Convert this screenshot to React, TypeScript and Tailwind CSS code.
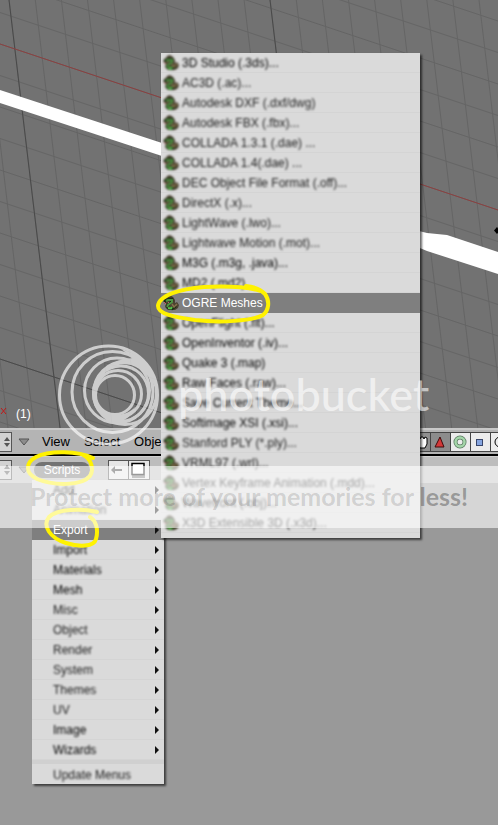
import React from "react";

type MenuEntry = { label: string; soft?: boolean; active?: boolean };

const exportItems: MenuEntry[] = [
  { label: "3D Studio (.3ds)..." },
  { label: "AC3D (.ac)...", soft: true },
  { label: "Autodesk DXF (.dxf/dwg)", soft: true },
  { label: "Autodesk FBX (.fbx)...", soft: true },
  { label: "COLLADA 1.3.1 (.dae) ...", soft: true },
  { label: "COLLADA 1.4(.dae) ...", soft: true },
  { label: "DEC Object File Format (.off)...", soft: true },
  { label: "DirectX (.x)...", soft: true },
  { label: "LightWave (.lwo)...", soft: true },
  { label: "Lightwave Motion (.mot)...", soft: true },
  { label: "M3G (.m3g, .java)..." },
  { label: "MD2 (.md2)" },
  { label: "OGRE Meshes", active: true },
  { label: "OpenFlight (.flt)..." },
  { label: "OpenInventor (.iv)..." },
  { label: "Quake 3 (.map)" },
  { label: "Raw Faces (.raw)..." },
  { label: "Save Current Theme..." },
  { label: "Softimage XSI (.xsi)..." },
  { label: "Stanford PLY (*.ply)...", soft: true },
  { label: "VRML97 (.wrl)...", soft: true },
  { label: "Vertex Keyframe Animation (.mdd)...", soft: true },
  { label: "Wavefront (.obj)...", soft: true },
  { label: "X3D Extensible 3D (.x3d)...", soft: true },
];

const scriptItems: MenuEntry[] = [
  { label: "Add" },
  { label: "Animation", soft: true },
  { label: "Export", active: true },
  { label: "Import" },
  { label: "Materials" },
  { label: "Mesh" },
  { label: "Misc", soft: true },
  { label: "Object", soft: true },
  { label: "Render", soft: true },
  { label: "System", soft: true },
  { label: "Themes", soft: true },
  { label: "UV", soft: true },
  { label: "Image" },
  { label: "Wizards" },
];

const steep = Array.from({ length: 21 }, (_, i) => -43 + i * 26.1);
const gentle = Array.from({ length: 19 }, (_, i) => -145 + i * 31.5);

function textTone(item: MenuEntry) {
  if (item.active) return "text-white";
  return item.soft ? "text-[#222222] blur-[1px]" : "text-black blur-[1px]";
}

function PythonIcon({ sharp }: { sharp?: boolean }) {
  return (
    <svg className={sharp ? "h-4 w-4 shrink-0" : "h-4 w-4 shrink-0 blur-[1px]"} viewBox="0 0 16 16" fill="none">
      <path d="M1 4 L3 3 L4 1 L7 0 L10 2 L12 5 L12 8 L14 7 L16 10 L15 13 L12 15 L5 15 L2 12 L3 9 L1 8 Z" fill="#4b4230" />
      <path d="M1 7 L3 5 L6 4 L9 4 L9 6 L4 11 L5 13 L9 14 L13 11" stroke="#1a2a14" strokeWidth="2.500" />
      <path d="M3 6 L5 5 L9 5 L9 7 L5 10 L4 12" stroke="#4f9443" strokeWidth="2" />
      <path d="M5 13 L8 13.500 L9 12" stroke="#55c24a" strokeWidth="2" />
      <path d="M9 9 L11 12 L14 9" stroke="#86714c" strokeWidth="1.500" />
      <path d="M1 7 L3 9 M5 7 L6 8" stroke="#c0606a" strokeWidth="1" />
    </svg>
  );
}

function Viewport() {
  return (
    <section className="h-[428px] overflow-hidden bg-[#727272]">
      <svg className="h-[428px] w-[498px]" viewBox="0 0 498 428" fill="none">
        {gentle.map((y) => (
          <path key={y} d={`M0 ${y} L498 ${y + 166}`} stroke="#656565" />
        ))}
        {steep.map((x) => (
          <path key={x} d={`M${x} 0 L${x + 51} 428`} stroke="#656565" />
        ))}
        <path d="M9 0 L60 428 M270 0 L321 428 M0 359 L207 428" stroke="#4a4a4a" />
        <path d="M0 44 L498 210" stroke="#8c4141" />
        <path d="M0 90 L165 144 L165 157 L0 103 Z" fill="#fff" />
        <path d="M415 230 L427 233 L447 235 L498 252 L498 274 L427 251 L415 246 Z" fill="#fff" />
        <path d="M494 230.500 L497 227 L500 230.500 L497 234 Z" fill="#000" />
        <path d="M1 408 L6 414 M6 408 L1 414" stroke="#c01818" />
        <text x="16" y="418" fill="#fff" fontSize="12" fontFamily="Liberation Sans, sans-serif">(1)</text>
      </svg>
    </section>
  );
}

function WindowTypeButton({ label }: { label: string }) {
  return (
    <button aria-label={label} className="flex h-5 w-3 items-center justify-end border border-l-0 border-[#555555] bg-[#d2d2d2]">
      <svg className="h-3 w-2" viewBox="0 0 8 12" fill="#555">
        <path d="M1 5 L4 1 L7 5 Z M1 7 L4 11 L7 7 Z" />
      </svg>
    </button>
  );
}

function Collapse() {
  return (
    <svg className="h-3 w-3" viewBox="0 0 12 12">
      <path d="M1 3 L11 3 L6 9 Z" fill="#8c8c8c" stroke="#555" />
    </svg>
  );
}

function ViewHeader() {
  return (
    <header className="flex h-7 items-center justify-between border-t-2 border-b-2 border-t-[#c8c8c8] border-b-black bg-[#b4b4b4]">
      <div className="flex items-center">
        <WindowTypeButton label="3D view window type" />
        <span className="mr-3 ml-1.5"><Collapse /></span>
        <nav className="flex gap-3.5 text-[13px] text-black">
          <button>View</button>
          <button>Select</button>
          <button>Object</button>
        </nav>
      </div>
      <div className="flex h-5 divide-x divide-[#444444] border-y border-[#444444] bg-[#ececec]">
        <button aria-label="Hand" className="w-5 bg-[#909090]">
          <svg className="h-[18px] w-5" viewBox="0 0 20 18">
            <path d="M6 4 L8 4 L9 6 L10 4 L12 4 L13 6 L14 4 L16 5 L16 11 L14 15 L9 15 L7 11 Z" fill="#fff" stroke="#000" />
          </svg>
        </button>
        <button aria-label="Translate" className="w-5 bg-[#8c8c8c]">
          <svg className="h-[18px] w-5" viewBox="0 0 20 18">
            <path d="M9 4 L13 14 L4 14 Z" fill="#d33838" stroke="#400c0c" />
          </svg>
        </button>
        <button aria-label="Rotate" className="w-5">
          <svg className="h-[18px] w-5" viewBox="0 0 20 18" fill="none">
            <circle cx="9" cy="9" r="4.500" stroke="#5a7a60" strokeWidth="4" />
            <circle cx="9" cy="9" r="4.500" stroke="#a5d6aa" strokeWidth="2.500" />
          </svg>
        </button>
        <button aria-label="Scale" className="w-5">
          <svg className="h-[18px] w-5" viewBox="0 0 20 18">
            <rect x="5.500" y="6.500" width="6" height="6" fill="#86a5e0" stroke="#39466b" />
          </svg>
        </button>
        <button aria-label="Orientation" className="w-[7px] overflow-hidden">
          <svg className="h-[18px] w-5" viewBox="0 0 20 18" fill="none">
            <circle cx="9" cy="9" r="5" stroke="#000" />
          </svg>
        </button>
      </div>
    </header>
  );
}

function ScriptsHeader() {
  return (
    <header className="flex h-[27px] items-center border-t border-[#d0d0d0] bg-[#bdbdbd]">
      <WindowTypeButton label="Scripts window type" />
      <span className="mr-1 ml-1.5"><Collapse /></span>
      <button className="h-4 w-14 rounded-lg bg-[#737373] text-[12px] leading-4 text-white">Scripts</button>
      <div className="ml-[18px] flex h-5 divide-x divide-[#555555] border border-[#555555] bg-[#e6e6e6]">
        <button aria-label="Back" className="w-5">
          <svg className="h-[18px] w-5" viewBox="0 0 20 18">
            <path d="M2 9 L6 5 L6 8 L13 8 L13 10 L6 10 L6 13 Z" fill="#333" />
          </svg>
        </button>
        <button aria-label="Full window" className="w-5">
          <svg className="h-[18px] w-5" viewBox="0 0 20 18">
            <rect x="3" y="14" width="13" height="3" fill="#777" />
            <rect x="3" y="2.500" width="12" height="11" fill="#fff" stroke="#000" strokeWidth="1.500" />
          </svg>
        </button>
      </div>
    </header>
  );
}

function ScriptsMenu() {
  return (
    <div role="menu" className="absolute top-[480px] left-8 w-[132px] bg-[#dadada] shadow-[2px_2px_2px_#00000099]">
      {scriptItems.map((item) => (
        <button
          key={item.label}
          role="menuitem"
          className={
            item.active
              ? "flex h-5 w-full items-center justify-between bg-[#7f7f7f] pr-1 pl-[21px] text-[12px]"
              : "flex h-5 w-full items-center justify-between pr-1 pl-[21px] text-[12px] inset-shadow-[0_-1px_#d4d4d4]"
          }
        >
          <span className={textTone(item)}>{item.label}</span>
          <svg className="h-2 w-1.5" viewBox="0 0 6 8">
            <path d="M1 0 L5 4 L1 8 Z" fill="#111" />
          </svg>
        </button>
      ))}
      <div className="h-1 bg-[#d0d0d0]" />
      <button role="menuitem" className="flex h-5 w-full items-end pl-[21px] text-[12px]">
        <span className="text-[#222222] blur-[1px]">Update Menus</span>
      </button>
    </div>
  );
}

function ExportMenu() {
  return (
    <div role="menu" className="absolute top-[53px] left-[161px] w-[259px] bg-[#dadada] pb-[5px] shadow-[2px_2px_2px_#00000099]">
      {exportItems.map((item) => (
        <button
          key={item.label}
          role="menuitem"
          className={
            item.active
              ? "flex h-5 w-full items-center gap-[3px] bg-[#7f7f7f] pl-0.5 text-[12px]"
              : "flex h-5 w-full items-center gap-[3px] pl-0.5 text-[12px] inset-shadow-[0_-1px_#d4d4d4]"
          }
        >
          <PythonIcon sharp={item.active} />
          <span className={textTone(item)}>{item.label}</span>
        </button>
      ))}
    </div>
  );
}

function Highlights() {
  return (
    <svg className="pointer-events-none absolute top-0 left-0 h-[825px] w-[498px]" viewBox="0 0 498 825" fill="none" stroke="#fff200" strokeWidth="4" strokeLinecap="round">
      <path d="M246 286 Q258 287 265 294 C270 301 269 310 263 315 C253 321 220 323 195 320 C174 317 158 314 158 306 C159 295 180 289 204 287 C226 286 248 287 261 291" />
      <path d="M93 458 C78 451 50 450 36 457 C25 463 25 473 37 479 C54 486 82 486 90 476 C95 468 90 458 83 455" />
      <path d="M97 512 C82 508 57 509 49 517 C42 526 50 538 66 543 C79 547 94 547 96 539 C99 528 95 520 90 517" />
    </svg>
  );
}

function Watermark() {
  return (
    <div className="pointer-events-none absolute top-0 left-0 w-full">
      <svg className="absolute top-[343px] left-[57px] h-[104px] w-[104px] opacity-65" viewBox="0 0 104 104" fill="none" stroke="#fff" strokeWidth="3">
        <circle cx="51.500" cy="52" r="49" />
        <circle cx="55.500" cy="49" r="40.500" />
        <circle cx="60" cy="47.500" r="32.500" />
        <circle cx="58" cy="52" r="19.500" />
        <circle cx="61" cy="51" r="23.500" />
        <circle cx="64" cy="50.500" r="27.500" />
        <circle cx="68" cy="50" r="31.500" />
        {/* solid parts where the rings meet */}
        <path d="M64 6 C85 11 99 28 101 50 C95 35 86 26 74 22 C62 19 50 24 42 36 C46 24 58 16 76 15 Z" fill="#fff" stroke="none" />
        <path d="M37 52 C39 64 47 72 58 72 C66 72 74 69 78 64 C74 76 64 80 55 78 C44 75 37 65 37 52 Z" fill="#fff" stroke="none" />
      </svg>
      <p className="absolute top-[370px] left-[178px] font-[Lato,sans-serif] text-[45px] leading-[48px] font-medium text-white/60">photobucket</p>
      <div className="absolute top-[466px] left-0 flex h-[62px] w-full items-center justify-center bg-white/60">
        <p className="font-[Lato,sans-serif] text-[25px] font-bold whitespace-nowrap text-black/15">
          Protect more of your memories for <span className="text-black/30">less!</span>
        </p>
      </div>
    </div>
  );
}

export default function App() {
  return (
    <main className="relative min-h-screen overflow-hidden bg-[#999999] font-['Liberation_Sans',sans-serif]">
      <Viewport />
      <ViewHeader />
      <ScriptsHeader />
      <ScriptsMenu />
      <ExportMenu />
      <Highlights />
      <Watermark />
    </main>
  );
}
